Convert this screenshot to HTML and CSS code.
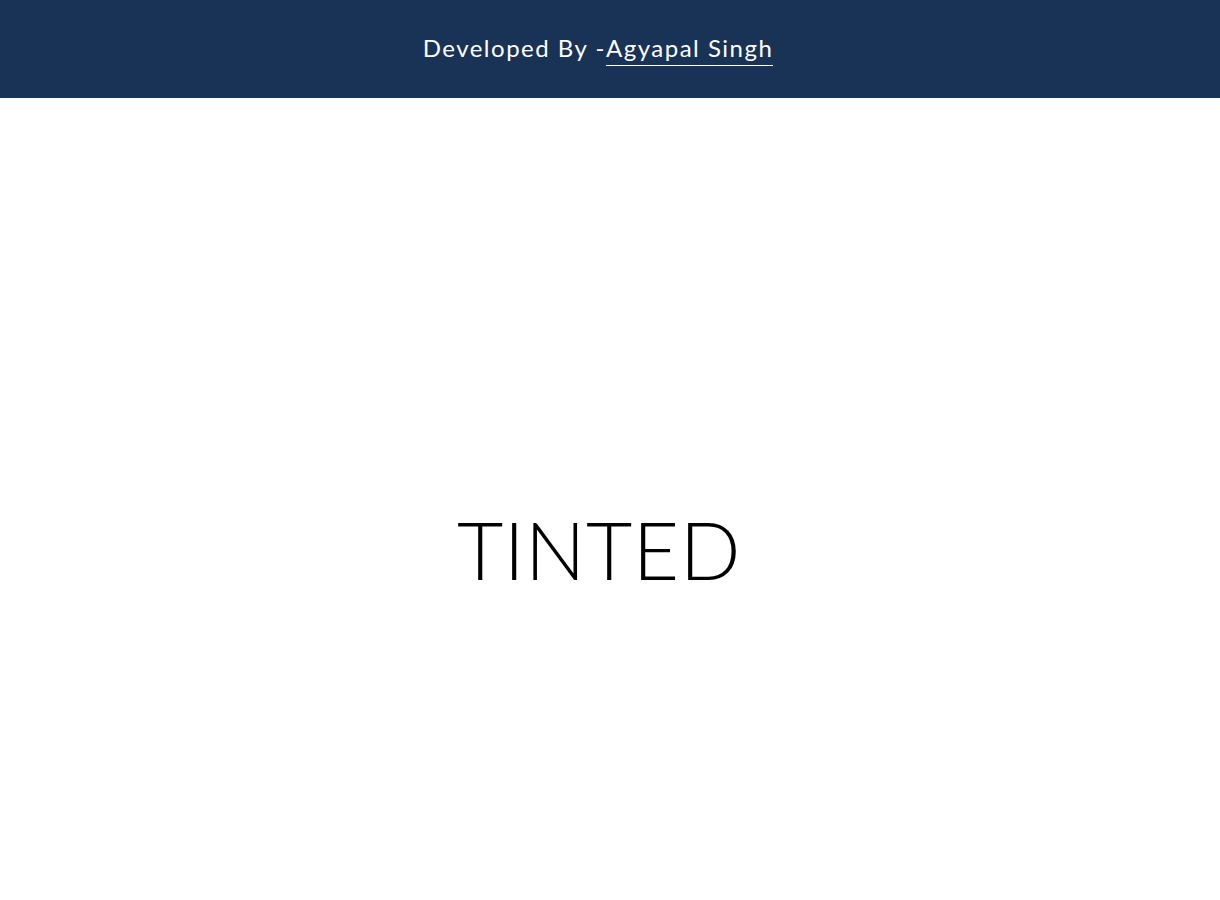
FILE: index.html
```html
<!DOCTYPE html>
<html>
<head>
<meta charset="utf-8">
<link rel="stylesheet" href="styles.css">
</head>
<body>
<header class="topbar">
  <p class="credit">Developed By -<a class="credit-link" href="#">Agyapal Singh</a></p>
</header>
<main class="hero">
  <h1 class="title">TINTED</h1>
</main>
</body>
</html>
```
FILE: styles.css
```css
html, body {
  margin: 0;
  padding: 0;
  background: #ffffff;
}
body {
  font-family: "Lato", "Open Sans", sans-serif;
}
.topbar {
  height: 98px;
  box-sizing: border-box;
  background: #193356;
  display: flex;
  align-items: center;
  justify-content: center;
  padding-right: 24px;
  padding-bottom: 3px;
}
.credit {
  margin: 0;
  color: #ffffff;
  font-size: 24px;
  font-weight: 400;
  letter-spacing: 1.5px;
}
.credit-link {
  color: #ffffff;
  text-decoration: none;
  border-bottom: 1px solid #ffffff;
  padding-bottom: 3px;
}
.hero {
  height: 802px;
  box-sizing: border-box;
  display: flex;
  align-items: center;
  justify-content: center;
  padding-right: 22px;
  padding-top: 99px;
}
.title {
  margin: 0;
  font-size: 80px;
  font-weight: 300;
  letter-spacing: 0.5px;
  color: #000;
}
```
